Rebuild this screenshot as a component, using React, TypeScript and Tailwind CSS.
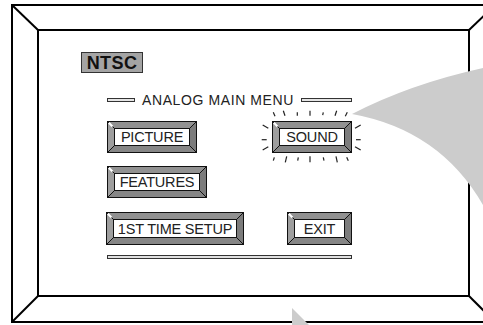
const ticks: [number, number, number, number][] = [
  [273.3, 113.3, 275, 117.3],
  [283.3, 111.7, 285, 116.7],
  [297.3, 113.3, 297.3, 116.7],
  [310, 111.7, 310, 116.7],
  [323.3, 113.3, 322.7, 116.2],
  [336.7, 111.7, 335, 116.7],
  [347.3, 113.3, 345.3, 117.3],
  [274.3, 158.3, 273.3, 161.7],
  [286.7, 157.3, 285.3, 163.3],
  [298.3, 158.3, 297.7, 161.7],
  [310, 157.3, 310, 163.3],
  [323.3, 158.3, 324, 161.7],
  [336, 157.3, 337.3, 163.3],
  [346.7, 158.3, 348.3, 161.7],
  [262.7, 126, 268.3, 129.3],
  [261.7, 140.7, 266.7, 140.7],
  [262.7, 151, 268.3, 147.7],
  [355, 129.3, 360.7, 126],
  [356, 140.7, 360.7, 140.7],
  [355, 147.7, 360.7, 151],
];

const Frame = () => (
  <svg className="absolute inset-0" width={483} height={325} viewBox="0 0 483 325">
    <g stroke="#000" strokeWidth={2} fill="none">
      <polyline points="500,5 12,5 12,322 500,322" />
      <rect x={38} y={30} width={431} height={266} />
      <line x1={12} y1={5} x2={38} y2={30} />
      <line x1={12} y1={322} x2={38} y2={296} />
      <line x1={469} y1={30} x2={495} y2={5} />
      <line x1={469} y1={296} x2={495} y2={322} />
    </g>
    <path d="M352 114 Q410 84 483 68 L483 205 Q440 130 352 114 Z" fill="#cccccc" />
    <path d="M292 308 L309 325 L292 325 Z" fill="#cccccc" />
  </svg>
);

const Btn = ({ label, w, h, glow }: { label: string; w: number; h: number; glow?: boolean }) => {
  const b = 7;
  return (
    <div className="relative flex items-center justify-center shrink-0" style={{ width: w, height: h }}>
      <svg className="absolute inset-0" width={w} height={h} viewBox={`0 0 ${w} ${h}`}>
        <polygon points={`0,0 ${w},0 ${w - b},${b} ${b},${b}`} fill="#919191" />
        <polygon points={`0,0 ${b},${b} ${b},${h - b} 0,${h}`} fill="#9e9e9e" />
        <polygon points={`${w},0 ${w},${h} ${w - b},${h - b} ${w - b},${b}`} fill="#7c7c7c" />
        <polygon points={`0,${h} ${b},${h - b} ${w - b},${h - b} ${w},${h}`} fill="#868686" />
        <rect x={0.5} y={0.5} width={w - 1} height={h - 1} fill="none" stroke="#111" />
        <rect x={b + 0.5} y={b + 0.5} width={w - 2 * b - 1} height={h - 2 * b - 1} fill="#fff" stroke="#111" />
        <g stroke="#111" strokeWidth={1}>
          <line x1={0} y1={0} x2={b} y2={b} />
          <line x1={w} y1={0} x2={w - b} y2={b} />
          <line x1={0} y1={h} x2={b} y2={h - b} />
          <line x1={w} y1={h} x2={w - b} y2={h - b} />
        </g>
        <line x1={1.8} y1={1.8} x2={5.5} y2={5.5} stroke="#fff" strokeWidth={2} />
      </svg>
      {glow && (
        <svg className="absolute left-[-12px] top-[-14px] overflow-visible" width={104} height={60} viewBox="260 108 104 60">
          {ticks.map((t, i) => (
            <line key={i} x1={t[0]} y1={t[1]} x2={t[2]} y2={t[3]} stroke="#222" strokeWidth={1.2} />
          ))}
        </svg>
      )}
      <span className="relative text-[14.5px] leading-none text-[#222] tracking-[-0.2px] pt-[1px]">{label}</span>
    </div>
  );
};

export default function App() {
  return (
    <div className="relative w-[483px] h-[325px] overflow-hidden bg-white font-['Liberation_Sans',Arial,sans-serif]">
      <Frame />
      <div className="relative flex flex-col pt-[52px] pl-[81px]">
        <div className="w-[62px] h-[21px] bg-[#a4a4a4] border border-[#333] flex items-center justify-center">
          <span className="text-[18px] font-bold leading-none text-[#111] tracking-[0.4px] pt-[1px]">NTSC</span>
        </div>
        <div className="ml-[26px] mt-[19px] w-[245px] flex items-center gap-[7px]">
          <div className="w-[28px] h-[4px] border border-[#333] bg-[#e5e5e5]" />
          <span className="text-[14px] leading-[16px] text-[#222] tracking-[0.6px]">ANALOG MAIN MENU</span>
          <div className="flex-1 h-[4px] border border-[#333] bg-[#e5e5e5]" />
        </div>
        <div className="ml-[26px] mt-[13px] flex">
          <Btn label="PICTURE" w={90} h={32} />
          <div className="ml-[75px]">
            <Btn label="SOUND" w={80} h={32} glow />
          </div>
        </div>
        <div className="ml-[26px] mt-[13px] flex">
          <Btn label="FEATURES" w={100} h={32} />
        </div>
        <div className="ml-[25px] mt-[14px] flex gap-[43px]">
          <Btn label="1ST TIME SETUP" w={138} h={33} />
          <Btn label="EXIT" w={65} h={33} />
        </div>
        <div className="ml-[26px] mt-[10px] w-[245px] h-[4px] border border-[#333] bg-[#e0e0e0]" />
      </div>
    </div>
  );
}
